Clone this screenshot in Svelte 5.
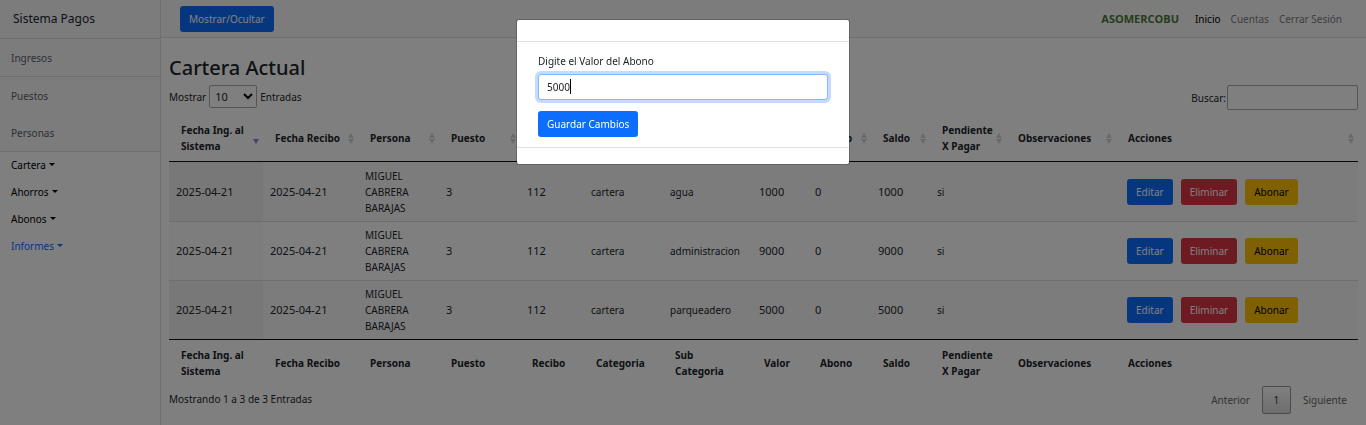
<script>
  import { onMount } from 'svelte';

  const columns = [
    { label: 'Fecha Ing. al Sistema', key: 'ingreso', weight: 94, numeric: true },
    { label: 'Fecha Recibo', key: 'fecha', weight: 95, numeric: true },
    { label: 'Persona', key: 'persona', weight: 81 },
    { label: 'Puesto', key: 'puesto', weight: 81, numeric: true },
    { label: 'Recibo', key: 'recibo', weight: 64, numeric: true },
    { label: 'Categoria', key: 'categoria', weight: 79 },
    { label: 'Sub Categoria', key: 'sub', weight: 89 },
    { label: 'Valor', key: 'valor', weight: 56, numeric: true },
    { label: 'Abono', key: 'abono', weight: 63, numeric: true },
    { label: 'Saldo', key: 'saldo', weight: 59, numeric: true },
    { label: 'Pendiente X Pagar', key: 'pendiente', weight: 76 },
    { label: 'Observaciones', key: 'observaciones', weight: 110 },
    { label: 'Acciones', key: 'acciones', weight: 242 }
  ];
  const total = columns.reduce((sum, c) => sum + c.weight, 0);

  const base = {
    ingreso: '2025-04-21', fecha: '2025-04-21', persona: 'MIGUEL CABRERA BARAJAS',
    puesto: '3', recibo: '112', categoria: 'cartera', abono: '0', pendiente: 'si', observaciones: ''
  };
  const rows = [
    { ...base, sub: 'agua', valor: '1000', saldo: '1000' },
    { ...base, sub: 'administracion', valor: '9000', saldo: '9000' },
    { ...base, sub: 'parqueadero', valor: '5000', saldo: '5000' }
  ];

  let value = $state('5000');
  let open = $state(true);
  let sidebar = $state(true);
  let field;

  onMount(() => {
    field.focus();
    field.setSelectionRange(value.length, value.length);
  });
</script>

<div class="layout">
  {#if sidebar}
    <aside>
      <div class="brand">Sistema Pagos</div>
      <nav class="links" aria-label="Principal">
        <a class="item" href="#ingresos">Ingresos</a>
        <a class="item plain" href="#puestos">Puestos</a>
        <a class="item" href="#personas">Personas</a>
        <a class="drop" href="#cartera">Cartera<i></i></a>
        <a class="drop" href="#ahorros">Ahorros<i></i></a>
        <a class="drop" href="#abonos">Abonos<i></i></a>
        <a class="drop blue" href="#informes">Informes<i></i></a>
      </nav>
    </aside>
  {/if}

  <div class="page">
    <header>
      <button class="btn primary" type="button" onclick={() => (sidebar = !sidebar)}>Mostrar/Ocultar</button>
      <nav class="top" aria-label="Cuenta">
        <span class="logo">ASOMERCOBU</span>
        <a class="active" href="#inicio">Inicio</a>
        <a href="#cuentas">Cuentas</a>
        <a href="#salir">Cerrar Sesión</a>
      </nav>
    </header>

    <main>
      <h1>Cartera Actual</h1>
      <div class="tools">
        <label>Mostrar
          <span class="select">
            <select><option>10</option><option>25</option><option>50</option></select>
            <svg viewBox="0 0 10 7" aria-hidden="true"><path d="M1 1l4 4 4-4" /></svg>
          </span>
          Entradas</label>
        <label class="search">Buscar:<input type="search" /></label>
      </div>

      <table>
        <colgroup>
          {#each columns as c}<col style:width="{(c.weight / total) * 100}%" />{/each}
        </colgroup>
        <thead>
          <tr>
            {#each columns as c, i}
              <th scope="col">
                <div class="head">
                  <span>{c.label}</span>
                  <svg class:sorted={i === 0} viewBox="0 0 6 11" aria-hidden="true">
                    <path class="up" d="M3 0l3 5H0z" /><path class="down" d="M3 11l3-5H0z" />
                  </svg>
                </div>
              </th>
            {/each}
          </tr>
        </thead>
        <tbody>
          {#each rows as row}
            <tr>
              {#each columns as c}
                <td class:numeric={c.numeric}>
                  {#if c.key === 'acciones'}
                    <div class="actions">
                      <button class="btn primary" type="button">Editar</button>
                      <button class="btn danger" type="button">Eliminar</button>
                      <button class="btn warning" type="button">Abonar</button>
                    </div>
                  {:else}{row[c.key]}{/if}
                </td>
              {/each}
            </tr>
          {/each}
        </tbody>
        <tfoot>
          <tr>
            {#each columns as c}<th><div class="head"><span>{c.label}</span></div></th>{/each}
          </tr>
        </tfoot>
      </table>

      <div class="bottom">
        <span>Mostrando 1 a 3 de 3 Entradas</span>
        <div class="pager">
          <button type="button">Anterior</button>
          <button type="button" class="current">1</button>
          <button type="button">Siguiente</button>
        </div>
      </div>
    </main>
  </div>
</div>

{#if open}
  <div class="backdrop">
    <div class="modal" role="dialog" aria-modal="true" aria-label="Abono">
      <div class="modal-head"></div>
      <form class="modal-body" onsubmit={(e) => { e.preventDefault(); open = false; }}>
        <label for="abono">Digite el Valor del Abono</label>
        <div class="field">
          <input id="abono" type="text" bind:value bind:this={field} />
          <span class="ghost" aria-hidden="true"></span>
        </div>
        <button class="btn primary" type="submit">Guardar Cambios</button>
      </form>
      <div class="modal-foot"></div>
    </div>
  </div>
{/if}

<style>
  :global(body) {
    background: #fff;
    color: #212529;
    font: 10px/16px "Noto Sans", "Open Sans", sans-serif;
  }
  :global(*) { box-sizing: border-box; }
  a { text-decoration: none; color: inherit; }
  button, input, select { font: inherit; color: inherit; margin: 0; }

  .layout { display: flex; min-height: 100vh; }
  aside { width: 161px; flex: none; border-right: 1px solid #dfdfdf; }
  .brand { height: 39px; padding: 10px 13px; font-size: 12px; line-height: 18px; border-bottom: 1px solid #dfdfdf; background: #f8f9fa; }
  .links { display: flex; flex-direction: column; }
  .item { padding: 11px 11px 10px; line-height: 16px; color: #5c6166; background: #f8f9fa; border-bottom: 1px solid #dfdfdf; }
  .item.plain { border-bottom: 0; }
  .drop { display: flex; align-items: center; gap: 3px; height: 27px; padding: 0 11px 2px; color: #000; }
  .drop i { border: 3px solid transparent; border-top-color: currentColor; border-bottom: 0; }
  .drop.blue { color: #0d6efd; }

  .page { flex: 1; min-width: 0; }
  header { display: flex; justify-content: space-between; align-items: center; height: 38px; padding: 0 24px 0 19px; border-bottom: 1px solid #dfdfdf; background: #f8f9fa; }
  .top { display: flex; align-items: center; gap: 10px; color: #7c7d7e; }
  .logo { margin-right: 6px; font: bold 11px/16px "Open Sans", sans-serif; color: #4a7a34; }
  .active { color: #000; }

  .btn { height: 26px; padding: 0 9px; border: 0; border-radius: 3px; line-height: 16px; white-space: nowrap; color: #fff; }
  .primary { background: #0d6efd; }
  .danger { background: #dc3545; }
  .warning { background: #ffc107; color: #000; }

  main { padding: 17px 8px 8px; }
  h1 { margin: 0; font-size: 20px; line-height: 26px; font-weight: 500; }
  .tools { display: flex; justify-content: space-between; align-items: flex-start; margin-top: 4px; }
  label { display: flex; align-items: center; }
  .tools label { gap: 3px; }
  .tools .search { gap: 1px; }
  .select { position: relative; display: flex; }
  .select select { appearance: none; width: 48px; height: 23px; padding: 0 5px; border: 1px solid #aaa; border-radius: 2px; background: transparent; font-size: 11px; }
  .select svg { position: absolute; right: 4px; top: 8px; width: 10px; height: 7px; fill: none; stroke: #000; stroke-width: 2; pointer-events: none; }
  .search input { width: 131px; height: 25px; padding: 3px; border: 1px solid #aaa; border-radius: 2px; background: transparent; }

  table { width: 100%; margin-top: 5px; table-layout: fixed; border-collapse: separate; border-spacing: 0; }
  th { padding: 7px 12px; text-align: left; font-weight: 700; }
  thead th { padding-right: 4px; border-bottom: 1px solid #111; }
  tfoot th { border-top: 1px solid #111; }
  .head { display: flex; align-items: center; justify-content: space-between; gap: 2px; }
  .head svg { flex: none; width: 6px; height: 11px; fill: #d3d3d3; }
  .head svg.sorted { fill: #8587e0; }
  .sorted .up { display: none; }
  tbody td { height: 59px; padding: 5px 7px; border-top: 1px solid #ddd; }
  tbody tr:first-child td { border-top: 0; }
  tbody tr:nth-child(odd) td { background: #f9f9f9; }
  tbody td:first-child { background: #fafafa; }
  tbody tr:nth-child(odd) td:first-child { background: #f1f1f1; }
  .numeric { font-size: 11px; }
  .actions { display: flex; gap: 8px; padding-left: 4px; }

  .bottom { display: flex; justify-content: space-between; align-items: flex-start; }
  .bottom > span { padding-top: 5px; }
  .pager { display: flex; gap: 1px; color: #666; }
  .pager button { min-width: 29px; height: 28px; padding: 0 10px; border: 1px solid transparent; border-radius: 2px; background: none; }
  .pager .current { border-color: #979797; color: #333; background: linear-gradient(#fff, #dcdcdc); }

  .backdrop { position: fixed; inset: 0; padding: 19px; background: rgba(0, 0, 0, .5); }
  .modal { max-width: 334px; margin: 0 auto; border: 1px solid rgba(0, 0, 0, .2); border-radius: 3px; background: #fff; background-clip: padding-box; }
  .modal-head { height: 22px; border-bottom: 1px solid #dee2e6; }
  .modal-body { padding: 11px 21px 10px; }
  .modal-body label { margin-bottom: 5px; }
  .field { position: relative; margin-bottom: 11px; }
  .field input { display: block; width: 100%; height: 26px; padding: 0 8px; border: 1px solid #86b7fe; border-radius: 3px; outline: 0; box-shadow: 0 0 0 3px rgba(13, 110, 253, .25); caret-color: transparent; }
  .ghost { position: absolute; left: 32px; top: 5px; width: 1px; height: 15px; background: #000; }
  .modal-foot { height: 17px; border-top: 1px solid #dee2e6; }
</style>
